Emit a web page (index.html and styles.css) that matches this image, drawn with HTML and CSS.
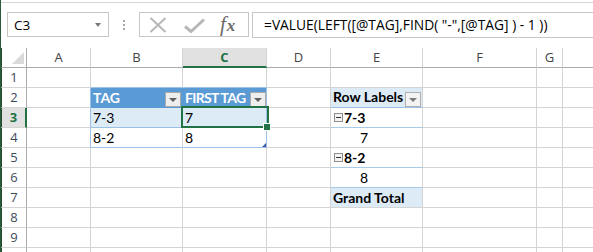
FILE: index.html
```html
<!DOCTYPE html>
<html>
<head>
<meta charset="utf-8">
<link rel="stylesheet" href="styles.css">
</head>
<body>
<div class="app">
  <div class="topline"></div>
  <div class="fbar">
    <div class="namebox"><span class="nb-text">C3</span><span class="nb-arrow"></span></div>
    <div class="grip"><i></i><i></i><i></i></div>
    <div class="fxbox">
      <svg class="ic-x" width="18" height="16" viewBox="0 0 18 16"><path d="M1.5 1 L16.5 15 M16.5 1 L1.5 15" stroke="#b7b7b7" stroke-width="2" fill="none"/></svg>
      <svg class="ic-ok" width="21" height="15" viewBox="0 0 21 15"><path d="M1 8.5 L7 13.5 L20 1.5" stroke="#b7b7b7" stroke-width="3" fill="none"/></svg>
      <span class="ic-fx"><span class="f">f</span><span class="x">x</span></span>
    </div>
    <div class="finput">=VALUE(LEFT([@TAG],FIND( "-",[@TAG] ) - 1 ))</div>
  </div>
  <div class="sheet">
    <!-- header row -->
    <div class="c hdr corner"><span class="tri"></span></div>
    <div class="c hdr col">A</div>
    <div class="c hdr col">B</div>
    <div class="c hdr col sel-col">C</div>
    <div class="c hdr col">D</div>
    <div class="c hdr col">E</div>
    <div class="c hdr col">F</div>
    <div class="c hdr col">G</div>
    <div class="c hdr col last"></div>
    <!-- row 1 -->
    <div class="c rh">1</div>
    <div class="c"></div>
    <div class="c tb-top"></div>
    <div class="c tb-top"></div>
    <div class="c"></div>
    <div class="c"></div>
    <div class="c"></div>
    <div class="c"></div>
    <div class="c last"></div>
    <!-- row 2 -->
    <div class="c rh">2</div>
    <div class="c tb-left"></div>
    <div class="c th th-b"><span class="th-text">TAG</span><span class="dd"></span></div>
    <div class="c th th-c"><span class="th-text">FIRST TAG</span><span class="dd"></span></div>
    <div class="c"></div>
    <div class="c pv-head">Row Labels<span class="dd pv"></span></div>
    <div class="c"></div>
    <div class="c"></div>
    <div class="c last"></div>
    <!-- row 3 -->
    <div class="c rh sel-row">3</div>
    <div class="c tb-left"></div>
    <div class="c td band">7-3</div>
    <div class="c td band tb-right">7</div>
    <div class="c"></div>
    <div class="c pv-group"><span class="minus"></span>7-3</div>
    <div class="c"></div>
    <div class="c"></div>
    <div class="c last"></div>
    <!-- row 4 -->
    <div class="c rh">4</div>
    <div class="c tb-left"></div>
    <div class="c td">8-2</div>
    <div class="c td tb-right">8</div>
    <div class="c"></div>
    <div class="c pv-item">7</div>
    <div class="c"></div>
    <div class="c"></div>
    <div class="c last"></div>
    <!-- row 5 -->
    <div class="c rh">5</div>
    <div class="c"></div>
    <div class="c"></div>
    <div class="c"></div>
    <div class="c"></div>
    <div class="c pv-group"><span class="minus"></span>8-2</div>
    <div class="c"></div>
    <div class="c"></div>
    <div class="c last"></div>
    <!-- row 6 -->
    <div class="c rh">6</div>
    <div class="c"></div>
    <div class="c"></div>
    <div class="c"></div>
    <div class="c"></div>
    <div class="c pv-item pv-before-total">8</div>
    <div class="c"></div>
    <div class="c"></div>
    <div class="c last"></div>
    <!-- row 7 -->
    <div class="c rh">7</div>
    <div class="c"></div>
    <div class="c"></div>
    <div class="c"></div>
    <div class="c"></div>
    <div class="c pv-total">Grand Total</div>
    <div class="c"></div>
    <div class="c"></div>
    <div class="c last"></div>
    <!-- row 8 -->
    <div class="c rh">8</div>
    <div class="c"></div><div class="c"></div><div class="c"></div><div class="c"></div>
    <div class="c"></div><div class="c"></div><div class="c"></div><div class="c last"></div>
    <!-- row 9 -->
    <div class="c rh">9</div>
    <div class="c"></div><div class="c"></div><div class="c"></div><div class="c"></div>
    <div class="c"></div><div class="c"></div><div class="c"></div><div class="c last"></div>
    <!-- row 10 (below the visible edge) -->
    <div class="c rh"></div>
    <div class="c"></div><div class="c"></div><div class="c"></div><div class="c"></div>
    <div class="c"></div><div class="c"></div><div class="c"></div><div class="c last"></div>

    <div class="active"></div>
    <div class="fill-handle"></div>
    <div class="resize-handle"></div>
  </div>
</div>
</body>
</html>
```
FILE: styles.css
```css
* { box-sizing: border-box; }
html, body { margin: 0; padding: 0; background: #fff; }
body { width: 593px; height: 252px; overflow: hidden; }

.app {
  width: 593px;
  height: 252px;
  overflow: hidden;
  border-left: 1px solid #2b5a38;
}

.topline {
  height: 3px;
  border-bottom: 1px solid #d6d6d6;
}

.fbar {
  height: 45px;
  display: flex;
  align-items: flex-start;
  padding-top: 9px;
  padding-left: 6px;
  font-family: "Open Sans", "DejaVu Sans", sans-serif;
}

.namebox {
  width: 102px;
  height: 25px;
  border: 1px solid #c6c6c6;
  display: flex;
  align-items: center;
  justify-content: space-between;
  padding-left: 6px;
  padding-right: 7px;
  font-size: 13.5px;
  color: #000;
}
.nb-arrow {
  width: 0; height: 0;
  border-left: 3.5px solid transparent;
  border-right: 3.5px solid transparent;
  border-top: 4px solid #7a7a7a;
}

.grip {
  width: 30px;
  height: 25px;
  display: flex;
  flex-direction: column;
  align-items: center;
  justify-content: center;
  gap: 2px;
}
.grip i {
  display: block;
  width: 2px;
  height: 2px;
  background: #a8a8a8;
}

.fxbox {
  width: 110px;
  height: 25px;
  border: 1px solid #c6c6c6;
  display: flex;
  align-items: center;
  padding-left: 9px;
}
.ic-x { margin-top: 1px; }
.ic-ok { margin-left: 17px; margin-top: 2px; }
.ic-fx {
  margin-left: 15px;
  font-family: "Liberation Serif", "DejaVu Serif", serif;
  font-style: italic;
  color: #6a6a6a;
  display: flex;
  align-items: baseline;
  line-height: 1;
}
.ic-fx .f { font-size: 21px; }
.ic-fx .x { font-size: 17px; font-weight: bold; margin-left: 1px; }

.finput {
  flex: 1;
  margin-left: 3px;
  height: 26px;
  border: 1px solid #c6c6c6;
  border-right: none;
  padding-left: 11px;
  font-size: 13.8px;
  line-height: 23px;
  color: #000;
  white-space: nowrap;
}

.sheet {
  position: relative;
  display: grid;
  grid-template-columns: 27px 64px 92px 84px 64px 92px 114px 26px 1fr;
  grid-auto-rows: 20px;
  margin-left: -1px;
  font-family: Lato, "Liberation Sans", sans-serif;
  font-size: 14px;
  color: #000;
}

.c {
  border-right: 1px solid #d4d4d4;
  border-bottom: 1px solid #d4d4d4;
  line-height: 20px;
  padding-left: 2px;
  white-space: nowrap;
  position: relative;
}
.c.last { border-right: none; }

.hdr {
  font-family: "Open Sans", "DejaVu Sans", sans-serif;
  font-size: 13px;
  line-height: 19px;
  color: #444;
  text-align: center;
  padding-left: 0;
  border-bottom-color: #ababab;
}
.corner {
  border-left: 2px solid #24502f;
  border-right-color: #ababab;
  display: flex;
  align-items: flex-end;
  justify-content: flex-end;
  padding: 0 2px 3px 0;
}
.tri {
  width: 0; height: 0;
  border-left: 12px solid transparent;
  border-bottom: 12px solid #dadada;
}
.sel-col {
  background: #e1e1e1;
  color: #217346;
  font-weight: bold;
  border-bottom: 2px solid #217346;
}

.rh {
  border-left: 2px solid #24502f;
  border-right-color: #ababab;
  font-family: "Open Sans", "DejaVu Sans", sans-serif;
  font-size: 13px;
  line-height: 19px;
  color: #3d4a5c;
  text-align: center;
  padding-left: 0;
}
.sel-row {
  background: #e1e1e1;
  color: #217346;
  font-weight: bold;
  border-right: 2px solid #217346;
}

/* table */
.tb-top { border-bottom-color: #9bc2e6; }
.tb-left { border-right-color: #9bc2e6; }
.tb-right { border-right-color: #9bc2e6; }
.th {
  background: #5b9bd5;
  color: #fff;
  font-weight: bold;
  border-bottom-color: #5b9bd5;
  display: flex;
  justify-content: space-between;
  align-items: flex-end;
}
.th-text { line-height: 20px; align-self: flex-start; }
.th-b { border-right-color: #5b9bd5; padding-right: 1px; }
.th-c { border-right-color: #9bc2e6; }
.th-c .th-text { letter-spacing: -0.7px; }
.td { border-bottom-color: #9bc2e6; }
.band { background: #ddebf7; }

.dd {
  width: 16px;
  height: 15px;
  border: 1px solid #a9a9a9;
  background: #eeeeee;
  position: relative;
  flex: none;
}
.dd::after {
  content: "";
  position: absolute;
  left: 3px;
  top: 5px;
  border-left: 4px solid transparent;
  border-right: 4px solid transparent;
  border-top: 4px solid #5f5f5f;
}
.dd.pv { background: #f3f3f3; border-color: #b0b0b0; }
.dd.pv::after { border-top-color: #7a7a7a; }

/* pivot */
.pv-head {
  background: #ddebf7;
  font-weight: bold;
  border-bottom-color: #9bc2e6;
  display: flex;
  justify-content: space-between;
  align-items: flex-end;
  padding-right: 1px;
}
.pv-group {
  font-weight: bold;
  border-bottom-color: #a9c9e8;
}
.minus {
  display: inline-block;
  width: 9px;
  height: 9px;
  border: 1px solid #8c8c8c;
  background: #f4f4f4;
  margin-left: 1px;
  margin-right: 1px;
  vertical-align: 1px;
  position: relative;
}
.minus::after {
  content: "";
  position: absolute;
  left: 1px;
  top: 3px;
  width: 5px;
  height: 1px;
  background: #333;
}
.pv-item { padding-left: 29px; }
.pv-before-total { border-bottom-color: #a9c9e8; }
.pv-total {
  background: #ddebf7;
  font-weight: bold;
}

/* overlays */
.active {
  position: absolute;
  left: 181px;
  top: 58px;
  width: 88px;
  height: 22px;
  border: 2px solid #217346;
}
.fill-handle {
  position: absolute;
  left: 264px;
  top: 76px;
  width: 6px;
  height: 6px;
  background: #217346;
  outline: 1px solid #fff;
}
.resize-handle {
  position: absolute;
  left: 262px;
  top: 95px;
  width: 0;
  height: 0;
  border-left: 4px solid transparent;
  border-bottom: 4px solid #3e5ba8;
}
```
